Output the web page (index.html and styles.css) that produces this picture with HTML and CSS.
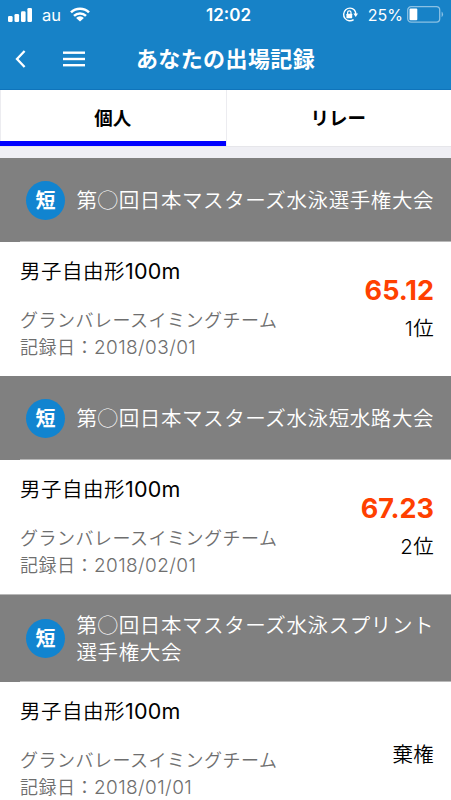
FILE: index.html
```html
<!DOCTYPE html>
<html lang="ja">
<head>
    <meta charset="UTF-8">
    <meta name="viewport" content="width=device-width, initial-scale=1.0">
    <title>あなたの出場記録</title>
    <link rel="stylesheet" href="styles.css">
</head>
<body>

<header class="header">
    <div class="status">
        <div class="status-left">
            <svg width="24" height="14" viewBox="0 0 24 14" fill="#fff">
                <rect x="0" y="8" width="4.6" height="6" rx="1.3"/>
                <rect x="6.5" y="6" width="4.6" height="8" rx="1.3"/>
                <rect x="13" y="3.2" width="4.6" height="10.8" rx="1.3"/>
                <rect x="19.4" y="0" width="4.6" height="14" rx="1.3"/>
            </svg>
            <span class="carrier">au</span>
            <svg width="20" height="15" viewBox="0 0 20 15">
                <path d="M1 5.4a13 13 0 0 1 18 0M4 8.9a8.8 8.8 0 0 1 12 0" fill="none" stroke="#fff" stroke-width="2.6"/>
                <path d="M10 14.6L6.1 10.9a5.6 5.6 0 0 1 7.8 0z" fill="#fff"/>
            </svg>
        </div>
        <div class="clock">12:02</div>
        <div class="status-right">
            <svg width="16" height="16" viewBox="0 0 16 16">
                <path d="M12.4 3A6.3 6.3 0 1 0 11.6 12.6M12.4 3A6.3 6.3 0 0 1 13.7 7.4" fill="none" stroke="#fff" stroke-width="1.4"/>
                <path d="M11.4 6.6h4.6l-2.3 3.4z" fill="#fff"/>
                <rect x="4.4" y="6.7" width="5.8" height="4.5" rx=".6" fill="#fff"/>
                <path d="M5.6 7V5.6a1.7 1.7 0 0 1 3.4 0V7" fill="none" stroke="#fff" stroke-width="1.2"/>
            </svg>
            <span class="percent">25%</span>
            <svg width="37" height="17" viewBox="0 0 37 17">
                <rect x=".7" y=".7" width="32" height="15.4" rx="3.4" fill="none" stroke="#8bc1e4" stroke-width="1.3"/>
                <rect x="2.5" y="2.6" width="7.8" height="11.7" rx="1" fill="#fff"/>
                <path d="M34.6 5.6a3.4 3.4 0 0 1 0 5.6z" fill="#8bc1e4"/>
            </svg>
        </div>
    </div>
    <div class="navbar">
        <div class="nav-buttons">
            <svg class="back" width="11" height="18" viewBox="0 0 11 18">
                <path d="M9.6 1L2 9l7.6 8" fill="none" stroke="#fff" stroke-width="2.3"/>
            </svg>
            <svg class="menu" width="22" height="16" viewBox="0 0 22 16" fill="#fff">
                <rect y="0.5" width="22" height="2.4"/>
                <rect y="6.8" width="22" height="2.4"/>
                <rect y="13" width="22" height="2.4"/>
            </svg>
        </div>
        <h1 class="title">あなたの出場記録</h1>
    </div>
</header>

<nav class="tabs">
    <div class="tab active">個人</div>
    <div class="tab">リレー</div>
</nav>

<main class="records">
    <div class="meet">
        <div class="badge">短</div>
        <div class="meet-name">第◯回日本マスターズ水泳選手権大会</div>
    </div>
    <div class="record">
        <div class="info">
            <div class="event">男子自由形<span class="distance">100m</span></div>
            <div class="team">グランバレースイミングチーム</div>
            <div class="date">記録日：<span class="day">2018/03/01</span></div>
        </div>
        <div class="result">
            <div class="time">65.12</div>
            <div class="rank">1位</div>
        </div>
    </div>

    <div class="meet">
        <div class="badge">短</div>
        <div class="meet-name">第◯回日本マスターズ水泳短水路大会</div>
    </div>
    <div class="record">
        <div class="info">
            <div class="event">男子自由形<span class="distance">100m</span></div>
            <div class="team">グランバレースイミングチーム</div>
            <div class="date">記録日：<span class="day">2018/02/01</span></div>
        </div>
        <div class="result">
            <div class="time">67.23</div>
            <div class="rank">2位</div>
        </div>
    </div>

    <div class="meet tall">
        <div class="badge">短</div>
        <div class="meet-name">第◯回日本マスターズ水泳スプリント選手権大会</div>
    </div>
    <div class="record">
        <div class="info">
            <div class="event">男子自由形<span class="distance">100m</span></div>
            <div class="team">グランバレースイミングチーム</div>
            <div class="date">記録日：<span class="day">2018/01/01</span></div>
        </div>
        <div class="result no-time">
            <div class="rank">棄権</div>
        </div>
    </div>
</main>

</body>
</html>
```
FILE: styles.css
```css
* {
    box-sizing: border-box;
}
body {
    margin: 0;
    height: 800px;
    overflow: hidden;
    font-family: Inter, "Noto Sans CJK JP", sans-serif;
    background: #efeff4;
    color: #000;
}
svg {
    display: block;
    flex: none;
}

/* header */
.header {
    height: 90px;
    background: #1782c7;
    border-bottom: 1px solid #0f74bb;
    color: #fff;
}
.status {
    display: grid;
    grid-template-columns: 1fr auto 1fr;
    align-items: center;
    height: 29px;
    padding: 0 7px 0 8px;
}
.status-left,
.status-right {
    display: flex;
    align-items: center;
}
.status-right {
    justify-content: flex-end;
}
.carrier {
    margin: 0 9px 0 10px;
    font-size: 16.5px;
    line-height: 20px;
}
.clock {
    padding-left: 5px;
    font-size: 17px;
    font-weight: 600;
}
.percent {
    margin: 0 4px 0 10px;
    font-size: 16px;
}
.navbar {
    display: grid;
    grid-template-columns: 1fr auto 1fr;
    align-items: center;
    height: 59px;
}
.nav-buttons {
    display: flex;
    align-items: center;
    gap: 37px;
    padding-left: 15px;
}
.title {
    margin: 0;
    font-size: 22px;
    font-weight: 700;
    letter-spacing: 0.4px;
    line-height: 30px;
}

/* tabs */
.tabs {
    display: flex;
    height: 57px;
    margin-bottom: 11px;
    background: #fff;
    border-bottom: 1px solid #e6e6ea;
}
.tab {
    flex: 1;
    height: 56px;
    box-shadow: inset 1px 0 #ececf0;
    font-size: 18.5px;
    font-weight: 700;
    line-height: 57px;
    text-align: center;
}
.tab.active {
    border-bottom: 5px solid #00f;
}

/* records */
.meet {
    display: flex;
    align-items: center;
    height: 84px;
    padding-left: 26px;
    background: linear-gradient(#b8b8b8, #b8b8b8) 20px 100% / 100% 1px no-repeat #808080;
    color: #fff;
}
.meet.tall {
    height: 88px;
    border-top: 1px solid #b8b8b8;
}
.badge {
    flex: none;
    width: 39px;
    height: 39px;
    margin-right: 11.5px;
    border-radius: 50%;
    background: #1184d0;
    font-size: 20px;
    font-weight: 700;
    line-height: 40px;
    text-align: center;
}
.meet-name {
    width: 362px;
    padding-bottom: 2px;
    font-family: "Noto Sans CJK JP", sans-serif;
    font-size: 20.5px;
    font-weight: 350;
    letter-spacing: 0.6px;
    line-height: 27px;
}
.record {
    display: flex;
    justify-content: space-between;
    height: 134px;
    padding: 14px 17px 0 20px;
    background: #fff;
    white-space: nowrap;
}
.event {
    margin-bottom: 20px;
    font-size: 20.5px;
    font-weight: 350;
    letter-spacing: 0.5px;
    line-height: 30px;
}
.distance {
    font-size: 21.5px;
    font-weight: 400;
    letter-spacing: 0.2px;
}
.team,
.date {
    color: #6e6e6e;
    font-size: 18px;
    font-weight: 350;
    letter-spacing: 0.5px;
    line-height: 27px;
}
.day {
    font-size: 19px;
    letter-spacing: 0.4px;
}
.result {
    display: flex;
    flex-direction: column;
    justify-content: center;
    height: 107px;
    text-align: right;
}
.result.no-time {
    height: 118px;
}
.time {
    color: #ff4000;
    font-size: 27px;
    font-weight: 700;
    line-height: 38px;
}
.rank {
    font-size: 20.5px;
    font-weight: 350;
    letter-spacing: 0.3px;
    line-height: 38px;
}
```
